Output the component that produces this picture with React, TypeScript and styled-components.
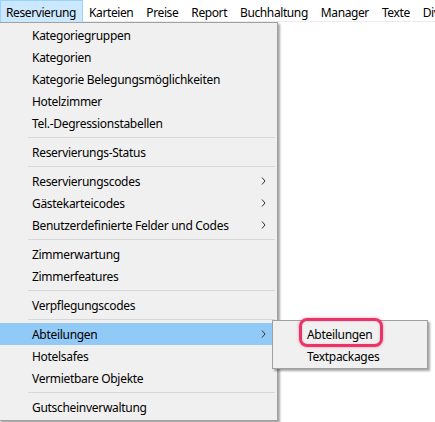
import React from "react"
import styled, { createGlobalStyle } from "styled-components"

const GlobalStyle = createGlobalStyle`
    html, body {
        margin: 0;
        padding: 0;
        background: #ffffff;
    }
    body {
        font-family: "Noto Sans", "Liberation Sans", sans-serif;
        font-size: 12px;
        color: #000000;
        overflow: hidden;
    }
`

const Window = styled.div`
    position: relative;
    width: 435px;
    height: 422px;
    background: #ffffff;
    overflow: hidden;
`

const MenuBar = styled.div`
    display: flex;
    height: 21px;
    border-bottom: 1px solid #ececec;
    background: #ffffff;
    white-space: nowrap;
    letter-spacing: -0.4px;
`

const BarItem = styled.div<{ $open?: boolean }>`
    display: flex;
    align-items: center;
    height: 20px;
    padding: 1px 6px 0 5px;
    border: 1px solid ${p => (p.$open ? "#99d1ff" : "transparent")};
    background: ${p => (p.$open ? "#cce8ff" : "transparent")};
`

const Dropdown = styled.div`
    position: absolute;
    left: -1px;
    top: 22px;
    width: 279px;
    box-sizing: border-box;
    padding: 1px 0 2px;
    background: #f0f0f0;
    border: 1px solid #a0a0a0;
    box-shadow: 2px 2px 2px rgba(0, 0, 0, 0.35);
    letter-spacing: -0.3px;
`

const Item = styled.div<{ $active?: boolean }>`
    display: flex;
    align-items: center;
    justify-content: space-between;
    height: 22px;
    padding: 0 11px 0 32px;
    background: ${p => (p.$active ? "#91c9f7" : "transparent")};
    white-space: nowrap;
`

const Separator = styled.div`
    height: 1px;
    margin: 3px 2px 3px 28px;
    background: #d7d7d7;
`

const Chevron = () => (
    <svg width="5" height="8" viewBox="0 0 5 8">
        <path d="M1 0.5 L4 4 L1 7.5" fill="none" stroke="#333333" strokeWidth="1" />
    </svg>
)

const Submenu = styled.div`
    position: absolute;
    left: 272px;
    top: 320px;
    width: 156px;
    height: 49px;
    box-sizing: border-box;
    padding-top: 2px;
    background: #f0f0f0;
    border: 1px solid #a0a0a0;
    box-shadow: 2px 2px 2px rgba(0, 0, 0, 0.35);
    letter-spacing: -0.3px;
`

const SubItem = styled.div`
    display: flex;
    align-items: center;
    height: 22px;
    padding-left: 34px;
    white-space: nowrap;
`

const Marker = styled.div`
    position: absolute;
    left: 26px;
    top: -3px;
    width: 84px;
    height: 29px;
    box-sizing: border-box;
    border: 3px solid #ea3468;
    border-radius: 8px;
    box-shadow: 0 0 3px rgba(234, 52, 104, 0.5), inset 0 0 2px rgba(234, 52, 104, 0.35);
`

type Entry = { label: string, sub?: boolean, active?: boolean } | "sep"

const entries: Entry[] = [
    { label: "Kategoriegruppen" },
    { label: "Kategorien" },
    { label: "Kategorie Belegungsmöglichkeiten" },
    { label: "Hotelzimmer" },
    { label: "Tel.-Degressionstabellen" },
    "sep",
    { label: "Reservierungs-Status" },
    "sep",
    { label: "Reservierungscodes", sub: true },
    { label: "Gästekarteicodes", sub: true },
    { label: "Benutzerdefinierte Felder und Codes", sub: true },
    "sep",
    { label: "Zimmerwartung" },
    { label: "Zimmerfeatures" },
    "sep",
    { label: "Verpflegungscodes" },
    "sep",
    { label: "Abteilungen", sub: true, active: true },
    { label: "Hotelsafes" },
    { label: "Vermietbare Objekte" },
    "sep",
    { label: "Gutscheinverwaltung" },
]

const bar = ["Reservierung", "Karteien", "Preise", "Report", "Buchhaltung", "Manager", "Texte", "Diverses"]

export default function App() {
    return (
        <Window>
            <GlobalStyle />
            <MenuBar>
                {bar.map((b, i) => (
                    <BarItem key={b} $open={i === 0}>{b}</BarItem>
                ))}
            </MenuBar>

            <Dropdown>
                {entries.map((e, i) =>
                    e === "sep" ? (
                        <Separator key={i} />
                    ) : (
                        <Item key={i} $active={e.active}>
                            <span>{e.label}</span>
                            {e.sub && <Chevron />}
                        </Item>
                    )
                )}
            </Dropdown>

            <Submenu>
                <SubItem>Abteilungen</SubItem>
                <SubItem>Textpackages</SubItem>
                <Marker />
            </Submenu>
        </Window>
    )
}
